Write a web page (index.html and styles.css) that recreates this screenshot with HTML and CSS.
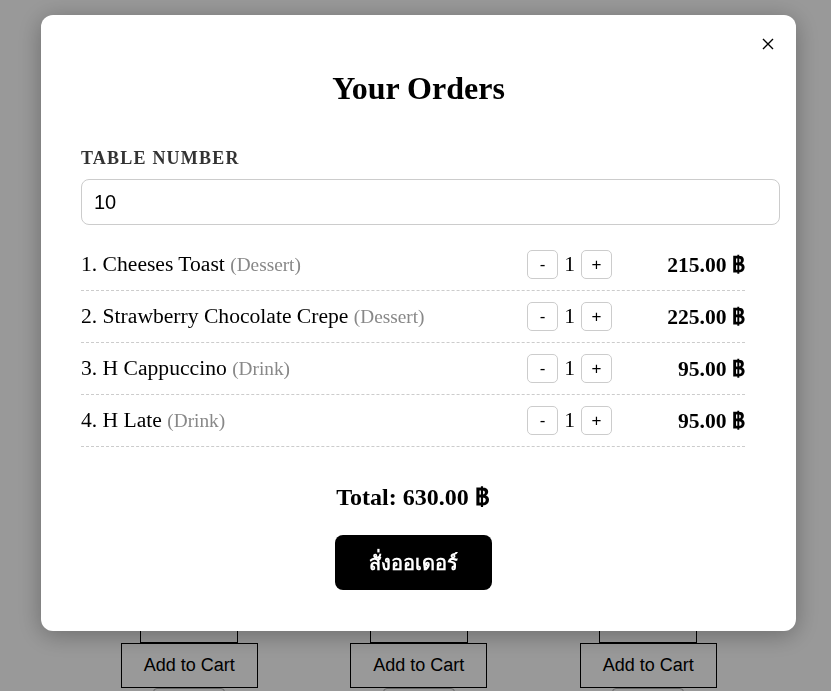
FILE: index.html
```html
<!DOCTYPE html>
<html lang="th">
<head>
<meta charset="utf-8">
<title>Your Orders</title>
<link rel="stylesheet" href="styles.css">
</head>
<body>
<div class="page">
  <div class="card">
    <div class="card-img"></div>
    <button class="add-btn">Add to Cart</button>
    <div class="card-more"></div>
  </div>
  <div class="card">
    <div class="card-img"></div>
    <button class="add-btn">Add to Cart</button>
    <div class="card-more"></div>
  </div>
  <div class="card">
    <div class="card-img"></div>
    <button class="add-btn">Add to Cart</button>
    <div class="card-more"></div>
  </div>
</div>

<div class="overlay">
  <div class="modal">
    <button class="close" aria-label="close">
      <svg width="12" height="12" viewBox="0 0 12 12"><path d="M1 1L11 11M11 1L1 11" stroke="#000" stroke-width="1.4" fill="none"/></svg>
    </button>
    <h2 class="title">Your Orders</h2>
    <label class="label">TABLE NUMBER</label>
    <input class="table-input" type="text" value="10">
    <div class="list">
      <div class="row">
        <div class="name">1. Cheeses Toast <span class="cat">(Dessert)</span></div>
        <div class="qty"><button class="qbtn">-</button><span class="qnum">1</span><button class="qbtn">+</button></div>
        <div class="price">215.00 ฿</div>
      </div>
      <div class="row">
        <div class="name">2. Strawberry Chocolate Crepe <span class="cat">(Dessert)</span></div>
        <div class="qty"><button class="qbtn">-</button><span class="qnum">1</span><button class="qbtn">+</button></div>
        <div class="price">225.00 ฿</div>
      </div>
      <div class="row">
        <div class="name">3. H Cappuccino <span class="cat">(Drink)</span></div>
        <div class="qty"><button class="qbtn">-</button><span class="qnum">1</span><button class="qbtn">+</button></div>
        <div class="price">95.00 ฿</div>
      </div>
      <div class="row">
        <div class="name">4. H Late <span class="cat">(Drink)</span></div>
        <div class="qty"><button class="qbtn">-</button><span class="qnum">1</span><button class="qbtn">+</button></div>
        <div class="price">95.00 ฿</div>
      </div>
      <div class="total">Total: 630.00 ฿</div>
      <div class="actions"><button class="order-btn">สั่งออเดอร์</button></div>
    </div>
  </div>
</div>
</body>
</html>
```

FILE: styles.css
```css
html, body {
  margin: 0;
  padding: 0;
  background: #fff;
  font-family: "Liberation Serif", "Times New Roman", serif;
  overflow: hidden;
  height: 691px;
}

.page {
  display: grid;
  grid-template-columns: repeat(3, 229.5px);
  padding: 542px 0 0 74.5px;
}

.card {
  display: flex;
  flex-direction: column;
  align-items: center;
}

.card-img {
  width: 98px;
  height: 101px;
  border: 1px solid #000;
  box-sizing: border-box;
}

.add-btn {
  width: 137px;
  height: 45px;
  margin-top: 0;
  border: 1px solid #000;
  background: #fff;
  font-family: "Liberation Sans", Arial, sans-serif;
  font-size: 18px;
  color: #000;
  padding: 0;
}

.card-more {
  width: 70px;
  height: 30px;
  border: 1px solid #aaa;
  border-radius: 4px;
  margin-top: 0;
}

.overlay {
  position: fixed;
  inset: 0;
  background: rgba(0, 0, 0, 0.4);
  display: flex;
  align-items: flex-start;
  padding: 15px 0 0 41px;
}

.modal {
  position: relative;
  width: 755px;
  height: 616px;
  box-sizing: border-box;
  background: #fff;
  border-radius: 12px;
  box-shadow: 0 4px 24px rgba(0, 0, 0, 0.3);
  padding: 40px 40px 41px 40px;
}

.close {
  position: absolute;
  top: 22px;
  right: 21px;
  width: 14px;
  height: 14px;
  padding: 0;
  border: 0;
  background: none;
  display: flex;
  align-items: center;
  justify-content: center;
}

.title {
  margin: 15px 0 0 0;
  text-align: center;
  font-size: 32px;
  font-weight: bold;
  line-height: 37px;
  color: #000;
}

.label {
  display: block;
  margin-top: 41px;
  font-size: 18px;
  font-weight: bold;
  letter-spacing: 1.2px;
  color: #333;
  line-height: 20px;
}

.table-input {
  display: block;
  margin-top: 11px;
  width: 699px;
  height: 46px;
  box-sizing: border-box;
  border: 1px solid #ccc;
  border-radius: 8px;
  padding: 0 12px;
  font-family: "Liberation Sans", Arial, sans-serif;
  font-size: 20px;
  color: #000;
  outline: none;
}

.list {
  width: 664px;
  margin-top: 14px;
}

.row {
  display: flex;
  align-items: center;
  height: 52px;
  box-sizing: border-box;
  padding: 0;
  border-bottom: 1px dashed #ccc;
}

.name {
  flex: 1;
  font-size: 21.6px;
  line-height: 24px;
  color: #000;
}

.cat {
  font-size: 19.3px;
  color: #888;
}

.qty {
  display: flex;
  align-items: center;
  height: 29px;
}

.qbtn {
  width: 31px;
  height: 29px;
  padding: 0;
  border: 1px solid #ccc;
  border-radius: 5px;
  background: #fff;
  font-family: "Liberation Sans", Arial, sans-serif;
  font-size: 17px;
  line-height: 1;
  color: #000;
}

.qnum {
  margin: 0 6px;
  font-size: 21.6px;
  line-height: 1;
}

.price {
  width: 133px;
  text-align: right;
  font-size: 21.6px;
  line-height: 24px;
  font-weight: bold;
  color: #000;
}

.total {
  margin-top: 36px;
  text-align: center;
  font-size: 24px;
  font-weight: bold;
  line-height: 28px;
}

.actions {
  display: flex;
  justify-content: center;
  margin-top: 24px;
}

.order-btn {
  width: 157px;
  height: 55px;
  border: 0;
  border-radius: 8px;
  background: #000;
  color: #fff;
  font-family: "Noto Sans", "DejaVu Sans", sans-serif;
  font-size: 20px;
  font-weight: bold;
  padding: 0;
}
```
